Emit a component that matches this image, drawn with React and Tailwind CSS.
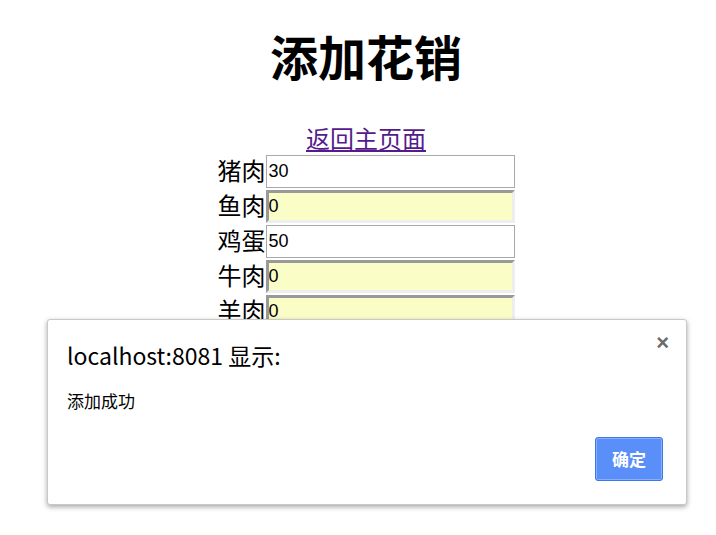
const items = [
  { name: "猪肉", value: "30", filled: true },
  { name: "鱼肉", value: "0", filled: false },
  { name: "鸡蛋", value: "50", filled: true },
  { name: "牛肉", value: "0", filled: false },
  { name: "羊肉", value: "0", filled: false },
];

const sans = "font-['Liberation_Sans','Noto_Sans_CJK_SC',sans-serif]";

const App = () => {
  return (
    <div className={`relative h-[535px] w-[716px] overflow-hidden bg-white pl-[16px] text-black ${sans}`}>
      <h1 className="pt-[28px] text-center text-[48px] font-bold leading-[64px]">添加花销</h1>

      <div className="mt-[34px] flex flex-col items-center">
        <a href="#" className="text-[24px] leading-[28px] text-[#551a8b] underline">
          返回主页面
        </a>
        <div className="mt-[1px] flex flex-col gap-[2px]">
          {items.map((item) => (
            <div key={item.name} className="flex items-center">
              <span className="text-[24px] leading-[33px]">{item.name}</span>
              <input
                readOnly
                value={item.value}
                className={
                  item.filled
                    ? "h-[33px] w-[249px] border border-[#a9a9a9] bg-white px-[2px] text-[18px] outline-none"
                    : "h-[33px] w-[249px] border-[3px] border-t-[#999] border-l-[#999] border-b-[#eee] border-r-[#eee] bg-[#fbfdc6] px-0 text-[18px] outline-none"
                }
              />
            </div>
          ))}
        </div>
      </div>

      {/* alert dialog */}
      <div className="absolute left-[47px] top-[319px] h-[186px] w-[640px] rounded-[3px] border border-[#c8c8c8] bg-white shadow-[0_2px_5px_rgba(0,0,0,0.35)]">
        <button className="absolute right-[17px] top-[12px] text-[22px] font-bold leading-[22px] text-[#6b6b6b]">
          ×
        </button>
        <div className="pl-[19px] pt-[20px] text-[23px] leading-[30px] font-['Noto_Sans_CJK_SC',sans-serif]">
          localhost:8081 显示:
        </div>
        <div className="pl-[19px] pt-[20px] text-[17px] leading-[22px] font-['Noto_Sans_CJK_SC',sans-serif]">
          添加成功
        </div>
        <div className="flex justify-end pr-[23px] pt-[25px]">
          <button className="h-[44px] w-[68px] rounded-[3px] border border-[#3b78e7] bg-[#5a8ef8] text-[17px] font-bold text-white shadow-[inset_0_0_0_1px_#8ab0fb] font-['Noto_Sans_CJK_SC',sans-serif]">
            确定
          </button>
        </div>
      </div>
    </div>
  );
};

export default App;
